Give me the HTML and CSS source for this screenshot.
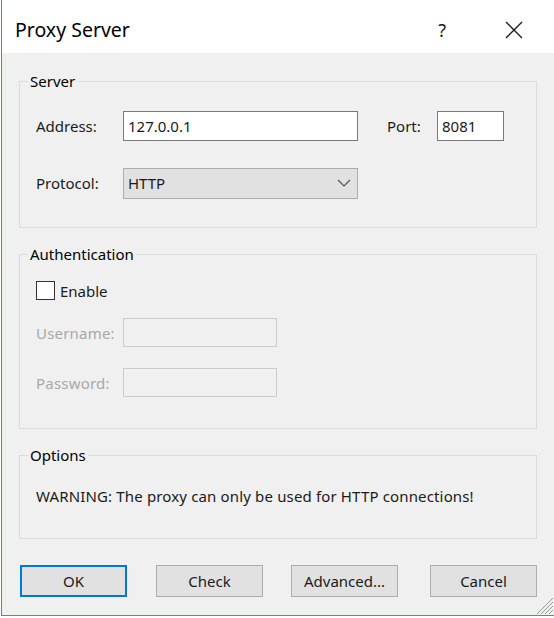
FILE: index.html
```html
<!DOCTYPE html>
<html>
<head>
<meta charset="utf-8">
<link rel="stylesheet" href="styles.css">
</head>
<body>
<div class="window">
  <div class="titlebar">
    <span class="title">Proxy Server</span>
    <span class="tb-help">?</span>
    <span class="tb-close">
      <svg width="18" height="18" viewBox="0 0 18 18"><path d="M1 1 L17 17 M17 1 L1 17" stroke="#1a1a1a" stroke-width="1.3" fill="none"/></svg>
    </span>
  </div>
  <div class="body">
    <fieldset class="group group-server">
      <legend>Server</legend>
      <div class="row">
        <span class="lbl lbl-w">Address:</span>
        <div class="input input-addr">127.0.0.1</div>
        <span class="lbl lbl-port">Port:</span>
        <div class="input input-port">8081</div>
      </div>
      <div class="row row-gap">
        <span class="lbl lbl-w">Protocol:</span>
        <div class="select">
          <span>HTTP</span>
          <svg width="14" height="8" viewBox="0 0 14 8"><path d="M1 1 L7 7 L13 1" stroke="#555" stroke-width="1.2" fill="none"/></svg>
        </div>
      </div>
    </fieldset>

    <fieldset class="group group-auth">
      <legend>Authentication</legend>
      <div class="check-row">
        <span class="checkbox"></span>
        <span class="lbl">Enable</span>
      </div>
      <div class="row row-user">
        <span class="lbl lbl-w disabled">Username:</span>
        <div class="input input-dis"></div>
      </div>
      <div class="row row-pass">
        <span class="lbl lbl-w disabled">Password:</span>
        <div class="input input-dis"></div>
      </div>
    </fieldset>

    <fieldset class="group group-opt">
      <legend>Options</legend>
      <div class="warning">WARNING: The proxy can only be used for HTTP connections!</div>
    </fieldset>

    <div class="buttons">
      <div class="btn btn-default">OK</div>
      <div class="btn btn-check">Check</div>
      <div class="btn btn-adv">Advanced...</div>
      <div class="btn btn-cancel">Cancel</div>
    </div>
  </div>
  <svg class="grip" width="18" height="18" viewBox="0 0 18 18">
    <path d="M17 5 L5 17 M17 9 L9 17 M17 13 L13 17 M17 1 L1 17" stroke="#9a9a9a" stroke-width="1" fill="none"/>
  </svg>
</div>
</body>
</html>
```

FILE: styles.css
```css
html, body {
  margin: 0;
  padding: 0;
  background: #ffffff;
}
body {
  width: 554px;
  height: 618px;
  overflow: hidden;
  font-family: "Noto Sans", "DejaVu Sans", sans-serif;
  font-size: 15px;
  color: #1a1a1a;
}
.window {
  position: relative;
  margin-left: 1px;
  width: 553px;
  height: 616px;
  border-left: 1px solid #3c8ad8;
  border-bottom: 1px solid #3c8ad8;
  box-sizing: border-box;
  background: #f0f0f0;
  display: flex;
  flex-direction: column;
}
.titlebar {
  height: 53px;
  background: #ffffff;
  display: flex;
  align-items: center;
  flex-shrink: 0;
}
.title {
  margin-left: 13px;
  font-size: 19.5px;
  color: #000;
  flex: 1;
  padding-top: 6px;
}
.tb-help {
  font-size: 18px;
  color: #1a1a1a;
  margin-right: 59px;
  padding-top: 6px;
}
.tb-close {
  display: flex;
  margin-right: 31px;
  padding-top: 7px;
}
.body {
  padding: 18px 17px 0 17px;
  display: flex;
  flex-direction: column;
}
.group {
  margin: 0;
  border: 1px solid #dcdcdc;
  padding: 0 0 0 16px;
  min-width: 0;
}
.group legend {
  padding: 0 2px;
  margin-left: -8px;
  line-height: 20px;
  font-size: 15px;
  color: #000;
}
.group-server {
  height: 157px;
  box-sizing: border-box;
  padding-top: 20px;
}
.group-auth {
  margin-top: 16px;
  height: 185px;
  box-sizing: border-box;
  padding-top: 17px;
}
.group-opt {
  margin-top: 16px;
  height: 94px;
  box-sizing: border-box;
  padding-top: 21px;
}
.row {
  display: flex;
  align-items: center;
  height: 30px;
}
.row-gap {
  margin-top: 27px;
}
.lbl {
  color: #1a1a1a;
}
.lbl-w {
  width: 87px;
  flex-shrink: 0;
}
.disabled {
  color: #a8a8a8;
  letter-spacing: 0.2px;
}
.input {
  box-sizing: border-box;
  height: 30px;
  background: #fff;
  border: 1px solid #7a7a7a;
  padding: 0 4px;
  display: flex;
  align-items: center;
}
.input-addr {
  width: 235px;
}
.lbl-port {
  margin-left: 29px;
  width: 50px;
}
.input-port {
  width: 67px;
}
.select {
  box-sizing: border-box;
  width: 235px;
  height: 31px;
  background: #e1e1e1;
  border: 1px solid #adadad;
  display: flex;
  align-items: center;
  justify-content: space-between;
  padding: 0 6px 0 4px;
}
.check-row {
  display: flex;
  align-items: center;
  height: 19px;
}
.checkbox {
  box-sizing: border-box;
  width: 19px;
  height: 19px;
  border: 1px solid #333;
  background: #fff;
  margin-right: 5px;
}
.row-user {
  margin-top: 18px;
  height: 29px;
}
.row-pass {
  margin-top: 21px;
  height: 29px;
}
.input-dis {
  width: 154px;
  height: 29px;
  background: #f0f0f0;
  border-color: #cccccc;
}
.warning {
  color: #1a1a1a;
  letter-spacing: 0.15px;
}
.buttons {
  display: flex;
  margin-top: 26px;
  padding-left: 1px;
}
.btn {
  box-sizing: border-box;
  width: 107px;
  height: 32px;
  background: #e1e1e1;
  border: 1px solid #adadad;
  display: flex;
  align-items: center;
  justify-content: center;
  color: #1a1a1a;
}
.btn-default {
  border: 2px solid #0078d7;
}
.btn-check {
  margin-left: 29px;
}
.btn-adv {
  margin-left: 28px;
}
.btn-cancel {
  margin-left: 32px;
}
.grip {
  position: absolute;
  right: 0;
  bottom: 0;
}
```
